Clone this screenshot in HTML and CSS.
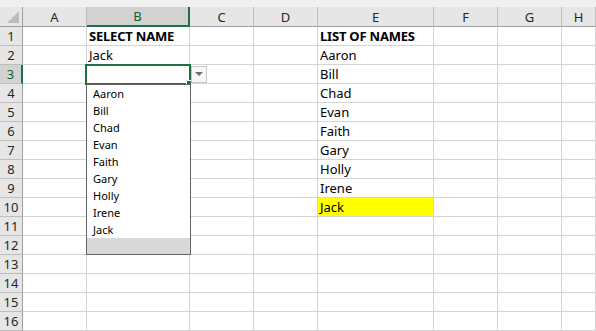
FILE: index.html
```html
<!DOCTYPE html>
<html lang="en">
<head>
    <meta charset="UTF-8">
    <title>Select Name</title>
    <link rel="stylesheet" href="styles.css">
</head>
<body>
    <div class="ribbon-edge"></div>
    <table class="sheet">
        <colgroup>
            <col class="c-head"><col class="c-a"><col class="c-b"><col class="c-c"><col class="c-d">
            <col class="c-e"><col class="c-f"><col class="c-g"><col class="c-h">
        </colgroup>
        <tr class="col-heads">
            <th class="corner">
                <svg width="12" height="12" viewBox="0 0 12 12"><polygon points="12,0 12,12 0,12" fill="#bdbdbd"/></svg>
            </th>
            <th>A</th><th class="active">B</th><th>C</th><th>D</th><th>E</th><th>F</th><th>G</th><th>H</th>
        </tr>
        <tr><th>1</th><td></td><td class="bold">SELECT NAME</td><td></td><td></td><td class="bold">LIST OF NAMES</td><td></td><td></td><td></td></tr>
        <tr><th>2</th><td></td><td>Jack</td><td></td><td></td><td>Aaron</td><td></td><td></td><td></td></tr>
        <tr>
            <th class="active">3</th><td></td>
            <td class="current">
                <div class="selection"><span class="fill-handle"></span></div>
                <div class="drop-btn">
                    <svg width="8" height="5" viewBox="0 0 8 5"><polygon points="0,0 8,0 4,4" fill="#6f6f6f"/></svg>
                </div>
                <ul class="drop-list">
                    <li>Aaron</li>
                    <li>Bill</li>
                    <li>Chad</li>
                    <li>Evan</li>
                    <li>Faith</li>
                    <li>Gary</li>
                    <li>Holly</li>
                    <li>Irene</li>
                    <li>Jack</li>
                </ul>
            </td>
            <td></td><td></td><td>Bill</td><td></td><td></td><td></td>
        </tr>
        <tr><th>4</th><td></td><td></td><td></td><td></td><td>Chad</td><td></td><td></td><td></td></tr>
        <tr><th>5</th><td></td><td></td><td></td><td></td><td>Evan</td><td></td><td></td><td></td></tr>
        <tr><th>6</th><td></td><td></td><td></td><td></td><td>Faith</td><td></td><td></td><td></td></tr>
        <tr><th>7</th><td></td><td></td><td></td><td></td><td>Gary</td><td></td><td></td><td></td></tr>
        <tr><th>8</th><td></td><td></td><td></td><td></td><td>Holly</td><td></td><td></td><td></td></tr>
        <tr><th>9</th><td></td><td></td><td></td><td></td><td>Irene</td><td></td><td></td><td></td></tr>
        <tr><th>10</th><td></td><td></td><td></td><td></td><td class="highlight">Jack</td><td></td><td></td><td></td></tr>
        <tr><th>11</th><td></td><td></td><td></td><td></td><td></td><td></td><td></td><td></td></tr>
        <tr><th>12</th><td></td><td></td><td></td><td></td><td></td><td></td><td></td><td></td></tr>
        <tr><th>13</th><td></td><td></td><td></td><td></td><td></td><td></td><td></td><td></td></tr>
        <tr><th>14</th><td></td><td></td><td></td><td></td><td></td><td></td><td></td><td></td></tr>
        <tr><th>15</th><td></td><td></td><td></td><td></td><td></td><td></td><td></td><td></td></tr>
        <tr><th>16</th><td></td><td></td><td></td><td></td><td></td><td></td><td></td><td></td></tr>
    </table>
</body>
</html>
```

FILE: styles.css
```css
body {
    margin: 0;
    background: #fff;
    font-family: "Noto Sans", Arial, sans-serif;
    overflow: hidden;
}

.ribbon-edge {
    height: 7px;
    background: #f0f0f0;
}

.sheet {
    width: 596px;
    table-layout: fixed;
    border-collapse: separate;
    border-spacing: 0;
}

.c-head { width: 23px; }
.c-a { width: 64px; }
.c-b { width: 103px; }
.c-c { width: 64px; }
.c-d { width: 64px; }
.c-e { width: 116px; }
.c-f { width: 64px; }
.c-g { width: 64px; }
.c-h { width: 34px; }

tr {
    height: 19px;
}

td {
    padding: 0 0 0 2px;
    border-right: 1px solid #d4d4d4;
    border-bottom: 1px solid #d4d4d4;
    font-size: 13px;
    line-height: 18px;
    color: #000;
    white-space: nowrap;
    overflow: visible;
}

th {
    padding: 0;
    background: #e6e6e6;
    border-right: 1px solid #bdbdbd;
    border-bottom: 1px solid #bdbdbd;
    font-size: 13px;
    font-weight: normal;
    line-height: 18px;
    color: #262626;
    text-align: center;
}

.col-heads {
    height: 20px;
}

.col-heads th {
    border-bottom-color: #9e9e9e;
}

tr th:first-child {
    border-right-color: #9e9e9e;
}

.corner {
    text-align: right;
    vertical-align: bottom;
}

.corner svg {
    display: block;
    margin: 0 3px 3px auto;
}

.col-heads th.active {
    background: #d2d2d2;
    color: #0f6234;
    border-bottom: 2px solid #1e7145;
}

tr th.active {
    background: #d2d2d2;
    color: #0f6234;
    border-right: 2px solid #1e7145;
}

.bold {
    font-weight: bold;
    letter-spacing: -0.2px;
}

.highlight {
    background: #ffff00;
}

.current {
    position: relative;
}

.selection {
    position: absolute;
    top: -1px;
    left: -2px;
    right: -2px;
    bottom: -2px;
    border: 2px solid #1e7145;
}

.fill-handle {
    position: absolute;
    right: -3px;
    bottom: -3px;
    width: 4px;
    height: 4px;
    background: #1e7145;
    border: 1px solid #fff;
}

.drop-btn {
    position: absolute;
    left: 104px;
    top: 1px;
    width: 16px;
    height: 17px;
    box-sizing: border-box;
    border: 1px solid #c8c8c8;
    background: #f7f7f7;
    display: flex;
    align-items: center;
    justify-content: center;
}

.drop-list {
    position: absolute;
    left: -1px;
    top: 19px;
    width: 105px;
    height: 171px;
    box-sizing: border-box;
    margin: 0;
    padding: 0 0 16px;
    list-style: none;
    background: #fff;
    border: 1px solid #646464;
    box-shadow: inset 0 -16px 0 #d9d9d9;
    z-index: 2;
}

.drop-list li {
    height: 17px;
    padding-left: 6px;
    font-size: 11px;
    line-height: 17px;
    color: #000;
}
```
